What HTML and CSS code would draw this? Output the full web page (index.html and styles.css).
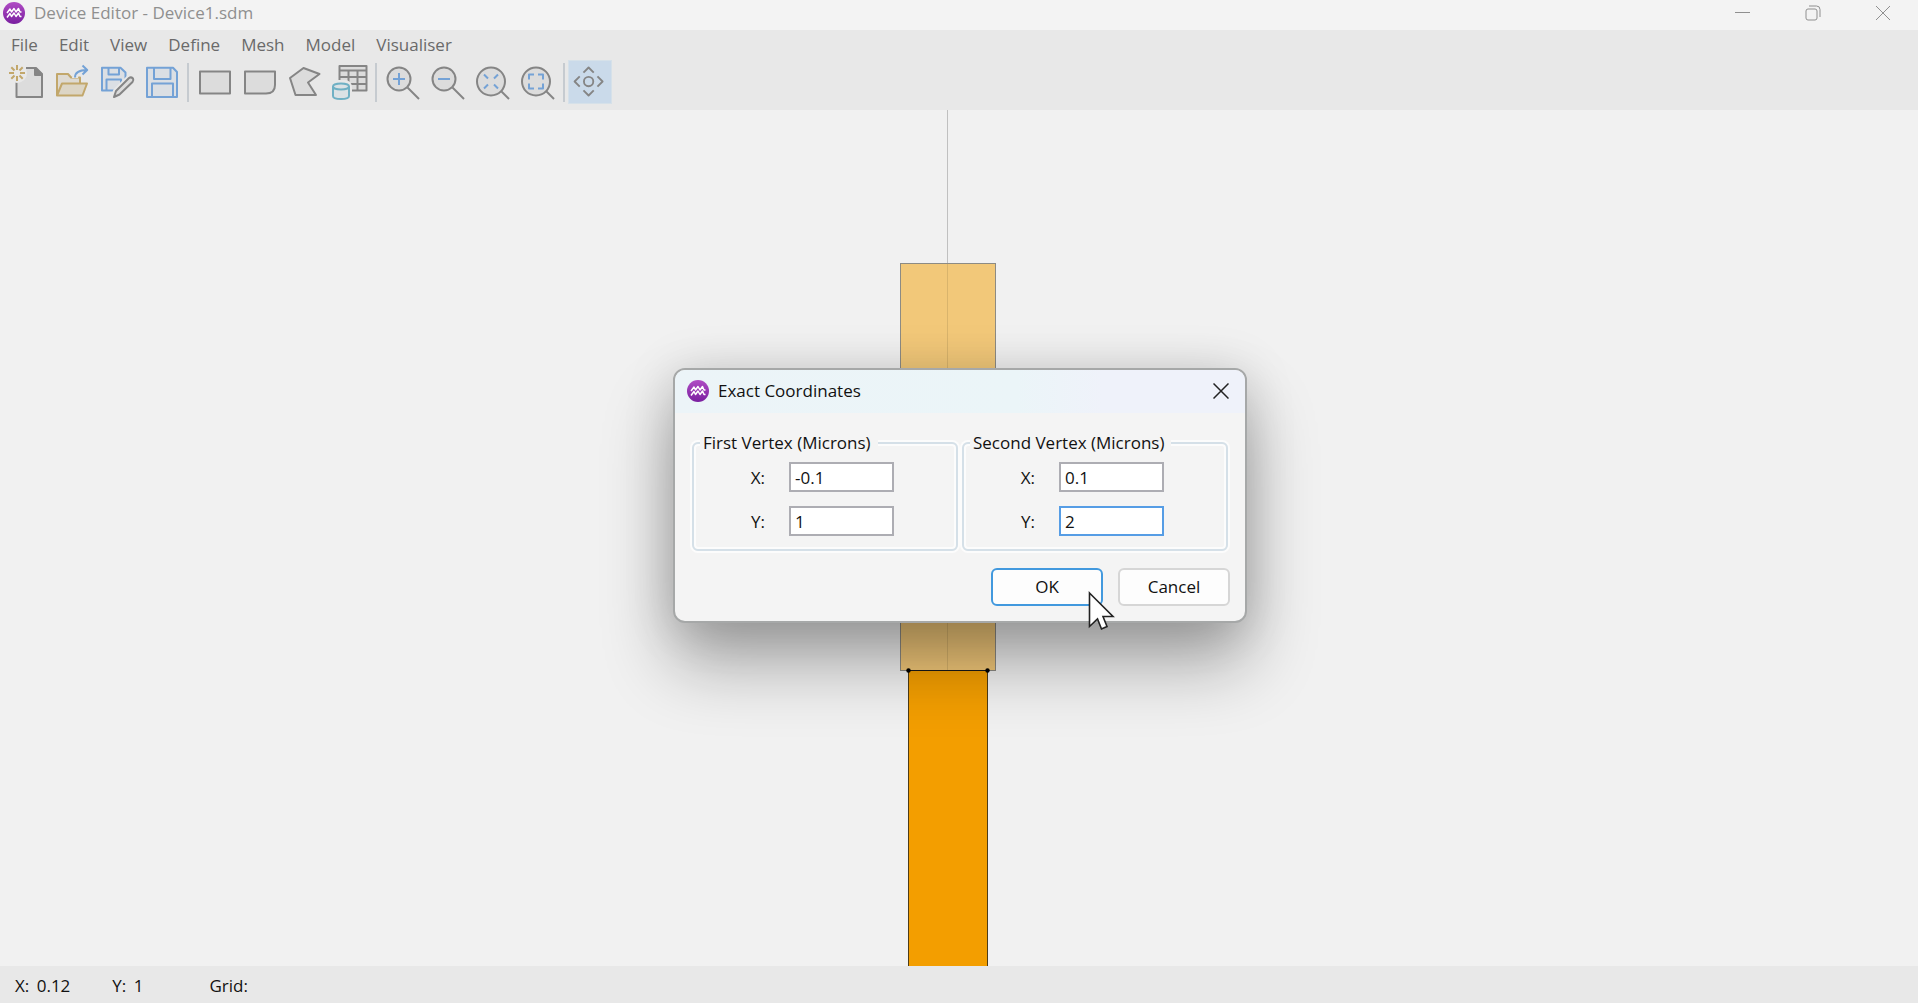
FILE: index.html
```html
<!DOCTYPE html>
<html lang="en">
<head>
<meta charset="utf-8">
<title>Device Editor - Device1.sdm</title>
<link rel="stylesheet" href="styles.css">
</head>
<body>
<svg width="0" height="0" class="defs" aria-hidden="true">
  <defs>
    <linearGradient id="purple" x1="0" y1="0" x2="0" y2="1"><stop offset="0" stop-color="#b04cc4"/><stop offset="1" stop-color="#7a1fa0"/></linearGradient>
    <symbol id="logo" viewBox="0 0 22 22">
      <circle cx="11" cy="11" r="11" fill="url(#purple)"/>
      <g fill="none" stroke="#fff" stroke-width="1.5" stroke-linejoin="round">
        <path d="M4 11L7 7L8.500 10L11 6.500L13 10L15.500 6.500L17 10H18.500"/>
        <path d="M4 15.500L7 11.500L8.500 14.500L11 11L13 14.500L15.500 11L17 14.500H18.500"/>
      </g>
    </symbol>
  </defs>
</svg>
<div class="app">
  <header class="titlebar">
    <svg class="logo"><use href="#logo"/></svg>
    <h1 class="title">Device Editor - Device1.sdm</h1>
    <div class="window-controls">
      <button type="button" aria-label="Minimise"><svg width="16" height="16" viewBox="0 0 16 16"><path d="M0 7.5H15"/></svg></button>
      <button type="button" aria-label="Restore"><svg width="16" height="16" viewBox="0 0 16 16"><rect x="1" y="4" width="11" height="11" rx="2"/><path d="M4 1H11.500Q15 1 15 4.500V12"/></svg></button>
      <button type="button" aria-label="Close"><svg width="16" height="16" viewBox="0 0 16 16"><path d="M1 1L15 15M15 1L1 15"/></svg></button>
    </div>
  </header>
  <nav class="menubar" aria-label="Menu">
    <button type="button">File</button>
    <button type="button">Edit</button>
    <button type="button">View</button>
    <button type="button">Define</button>
    <button type="button">Mesh</button>
    <button type="button">Model</button>
    <button type="button">Visualiser</button>
  </nav>
  <div class="toolbar" role="toolbar" aria-label="Tools">
    <button type="button" aria-label="New"><svg viewBox="0 0 45 44">
      <path d="M12.500 22V37H38V14L32 8H22" fill="#dcdcdc"/><path d="M31 8V15H38Z" fill="#858585"/>
      <circle cx="13" cy="13" r="10" fill="#e8e8e8" stroke="none"/>
      <path class="gold" d="M13 5V10M13 16V21M5 13H10M16 13H21M7.300 7.300L10.500 10.500M15.500 15.500L18.700 18.700M18.700 7.300L15.500 10.500M10.500 15.500L7.300 18.700"/></svg></button>
    <button type="button" aria-label="Open"><svg viewBox="0 0 45 44">
      <g class="gold"><path fill="#dedad2" d="M8 35.500V14H19L22 17.500H31V23.500"/><path fill="#dcd5c5" d="M8 35.500L13 23.500H38L33.500 35.500Z"/></g>
      <path d="M26 18Q26 10 37 10" stroke="#e8e8e8" stroke-width="6"/>
      <path class="blue" d="M26 17.500Q26 10 38 10M33.500 5.500L38.200 10L33.500 14.500"/></svg></button>
    <button type="button" aria-label="Save as"><svg viewBox="0 0 45 44">
      <g class="blue"><path fill="#dbdfe4" d="M8 7.700H26.500L31.500 12.500V30.500H8Z"/><path d="M14.500 8V14.500H25V8M12.500 30V19.500H27V30"/></g>
      <path d="M20 37L22 31L35 18Q37 16.500 39 18.500Q40 20.500 38.500 22L25.500 34.500Z" stroke="#e8e8e8" stroke-width="6"/>
      <path fill="#dcdcdc" d="M20 37L22 31L35 18Q37 16.500 39 18.500Q40 20.500 38.500 22L25.500 34.500Z"/></svg></button>
    <button type="button" aria-label="Save"><svg viewBox="0 0 45 44">
      <g class="blue"><path fill="#dbdfe4" d="M8 7.700H34L38 12V37H8Z"/><path d="M15 8V19H31.500V8M13 37V23.500H34V37"/></g></svg></button>
    <span class="separator"></span>
    <button type="button" aria-label="Rectangle"><svg viewBox="0 0 45 44"><rect x="8" y="11.500" width="30" height="22" fill="#dcdcdc"/></svg></button>
    <button type="button" aria-label="Rounded rectangle"><svg viewBox="0 0 45 44"><path fill="#dcdcdc" d="M8 11.500H38V25Q38 33.500 29 33.500H8Z"/></svg></button>
    <button type="button" aria-label="Polygon"><svg viewBox="0 0 45 44"><path fill="#dcdcdc" d="M21.500 8L37.500 14L26 22.500L34 35H13.500L8 18Z"/></svg></button>
    <button type="button" aria-label="Materials table"><svg viewBox="0 0 45 44">
      <rect x="12.500" y="6" width="27" height="24.500" fill="#dcdcdc"/><path d="M12.500 10.500H39.500M12.500 17H39.500M12.500 24H39.500M21.500 10.500V30.500M30.500 10.500V30.500"/>
      <rect x="3" y="20" width="22" height="21" rx="7" fill="#e8e8e8" stroke="none"/>
      <g class="teal"><path fill="#dbe2e5" d="M6 26.500V36Q6 39 14 39T22 36V26.500"/><ellipse cx="14" cy="26.500" rx="8" ry="3" fill="#dbe2e5"/></g></svg></button>
    <span class="separator"></span>
    <button type="button" aria-label="Zoom in"><svg viewBox="0 0 45 44"><circle cx="19" cy="19" r="11.500" fill="#dcdcdc"/><path d="M27.500 27.500L39 39"/><path class="blue" d="M13 19H25M19 13V25"/></svg></button>
    <button type="button" aria-label="Zoom out"><svg viewBox="0 0 45 44"><circle cx="19" cy="19" r="11.500" fill="#dcdcdc"/><path d="M27.500 27.500L39 39"/><path class="blue" d="M13 19H25"/></svg></button>
    <button type="button" aria-label="Zoom to fit"><svg viewBox="0 0 45 44"><circle cx="21" cy="21.500" r="14" fill="#dcdcdc"/><path d="M31 31L39 39"/><path class="blue" d="M14 14.500L18 18.500M28 14.500L24 18.500M14 28.500L18 24.500M28 28.500L24 24.500"/></svg></button>
    <button type="button" aria-label="Zoom window"><svg viewBox="0 0 45 44"><circle cx="21" cy="21.500" r="14" fill="#dcdcdc"/><path d="M31 31L39 39"/><path class="blue" d="M14 19.500V14.500H19M23 14.500H28V19.500M28 23.500V28.500H23M19 28.500H14V23.500"/></svg></button>
    <span class="separator"></span>
    <button type="button" class="active" aria-label="Pan" aria-pressed="true"><svg viewBox="0 0 45 44"><circle cx="21" cy="21.500" r="5"/><path d="M15.500 12L21 6.500L26.500 12M15.500 31L21 36.500L26.500 31M11.500 16L6 21.500L11.500 27M30.500 16L36 21.500L30.500 27"/></svg></button>
  </div>
  <main class="canvas">
    <svg class="device" viewBox="0 0 1918 856" preserveAspectRatio="xMidYMin slice">
      <rect x="900.500" y="153.500" width="95" height="407" fill="#f2c879" stroke="#8d8b84"/>
      <path d="M947.500 0V153" stroke="#c0c0c0"/>
      <path d="M947.500 154V560" stroke="#d9b46c"/>
      <rect x="908.500" y="560.500" width="79" height="320" fill="#f39e00" stroke="#4d3c18"/>
      <path d="M908 560.500H988" stroke="#1a1a1a"/>
      <circle cx="908.500" cy="560.500" r="2.200"/><circle cx="987.500" cy="560.500" r="2.200"/>
    </svg>
    <form class="dialog" role="dialog" aria-labelledby="dialog-title">
      <div class="dialog-title">
        <svg class="logo"><use href="#logo"/></svg>
        <h2 id="dialog-title">Exact Coordinates</h2>
        <button type="button" class="close" aria-label="Close"><svg width="16" height="16" viewBox="0 0 16 16"><path d="M0.500 0.500L15.500 15.500M15.500 0.500L0.500 15.500"/></svg></button>
      </div>
      <div class="groups">
        <fieldset>
          <legend>First Vertex (Microns)</legend>
          <div class="fields">
            <label for="x1">X:</label><input id="x1" type="text" value="-0.1">
            <label for="y1">Y:</label><input id="y1" type="text" value="1">
          </div>
        </fieldset>
        <fieldset>
          <legend>Second Vertex (Microns)</legend>
          <div class="fields">
            <label for="x2">X:</label><input id="x2" type="text" value="0.1">
            <label for="y2">Y:</label><input id="y2" class="focused" type="text" value="2">
          </div>
        </fieldset>
      </div>
      <div class="actions">
        <button type="submit" class="default">OK</button>
        <button type="button">Cancel</button>
      </div>
      <svg class="cursor" width="28" height="40" viewBox="0 0 28 40"><path d="M1.500 2L25 25.500H15L19 35.500L13.500 38L9.500 28L1.500 35.500Z" fill="#fff" stroke="#222" stroke-width="1.600"/></svg>
    </form>
  </main>
  <footer class="statusbar">
    <span class="readout">X: <output>0.12</output></span>
    <span class="readout">Y: <output>1</output></span>
    <span class="readout">Grid:</span>
  </footer>
</div>
</body>
</html>
```
FILE: styles.css
```css
* { box-sizing: border-box; }

body {
  margin: 0;
  font: 17px/24px "Open Sans", "Noto Sans", sans-serif;
  color: #111;
}

button, input { font: inherit; color: inherit; }
button { border: 0; padding: 0; background: none; }
h1, h2 { margin: 0; font-size: inherit; font-weight: 400; }
svg { display: block; }
.defs { position: absolute; }

.app {
  display: flex;
  flex-direction: column;
  height: 100vh;
  background: #e8e8e8;
}

.logo { width: 22px; height: 22px; flex: none; }

.titlebar {
  display: flex;
  align-items: center;
  gap: 9px;
  height: 30px;
  padding: 0 0 4px 3px;
  background: #f3f3f3;
}
.title { flex: 1; color: #8f8f8f; }
.window-controls { display: flex; }
.window-controls button { display: grid; place-items: center; width: 70px; height: 26px; }
.window-controls svg { fill: none; stroke: #8f8f8f; }

.menubar { display: flex; gap: 21px; height: 30px; padding-left: 11px; color: #6a6a6a; }
.menubar button { height: 29px; }

.toolbar { display: flex; height: 50px; padding: 0 4px; }
.toolbar button { width: 45px; height: 44px; }
.toolbar svg { width: 45px; height: 44px; fill: none; stroke: #858585; stroke-width: 2; stroke-linejoin: round; }
.toolbar .gold { stroke: #c2a76b; }
.toolbar .blue { stroke: #74a2d6; }
.toolbar .teal { stroke: #6fb0c4; }
.toolbar .active { width: 44px; background: #cadaea; border: 1px solid #d6e1e9; }
.toolbar .active svg { width: 42px; height: 42px; }
.separator { width: 2px; height: 39px; margin: 3px; background: #c6cbd0; }

.canvas { position: relative; flex: 1; min-height: 0; overflow: hidden; background: #f1f1f1; }
.device { width: 100%; height: 100%; }

.dialog {
  position: absolute;
  top: 258px;
  left: calc(50% + 1px);
  transform: translateX(-50%);
  width: 574px;
  border: 2px solid #a6a8a8;
  border-radius: 12px;
  background: #f4f4f4;
  box-shadow: 0 40px 70px rgba(0, 0, 0, 0.32), 0 4px 50px rgba(0, 0, 0, 0.15);
}
.dialog-title {
  display: flex;
  align-items: center;
  gap: 9px;
  height: 43px;
  padding: 0 16px 2px 12px;
  border-radius: 10px 10px 0 0;
  background: linear-gradient(90deg, #ecf4f8, #ebf5f8 60%, #eff2fa 75%);
}
.dialog-title h2 { flex: 1; }
.close svg { fill: none; stroke: #222; stroke-width: 1.5; }

.groups { display: grid; grid-template-columns: 1fr 1fr; gap: 4px; padding: 18px 17px 0; }
fieldset {
  min-width: 0;
  margin: 0;
  padding: 0 0 13px;
  border: 2px solid #d5e0e8;
  border-radius: 6px;
  box-shadow: 0 0 0 2px #fcfcfc, inset 0 0 0 2px #fcfcfc;
}
legend { margin-left: 6px; padding: 0 7px 0 3px; background: #f4f4f4; }
.fields {
  display: grid;
  grid-template-columns: 71px 105px;
  column-gap: 24px;
  row-gap: 14px;
  padding-top: 7px;
}
.fields label { justify-self: end; line-height: 32px; height: 30px; }
.fields input { width: 105px; height: 30px; padding: 0 4px; border: 2px solid #adadb3; background: #fff; outline: 0; }
.fields .focused { border-color: #569de5; }

.actions { display: flex; justify-content: flex-end; gap: 15px; padding: 17px 15px 15px; }
.actions button { width: 112px; height: 38px; border: 2px solid #d6d6d6; border-radius: 6px; background: #fdfdfd; }
.actions .default { border-color: #4299de; }
.cursor { position: absolute; right: 129px; bottom: -10px; }

.statusbar { display: flex; align-items: center; height: 37px; padding: 2px 15px 0; gap: 42px; }
.readout output { margin-left: 3px; }
.readout:last-child { margin-left: 24px; }
```
